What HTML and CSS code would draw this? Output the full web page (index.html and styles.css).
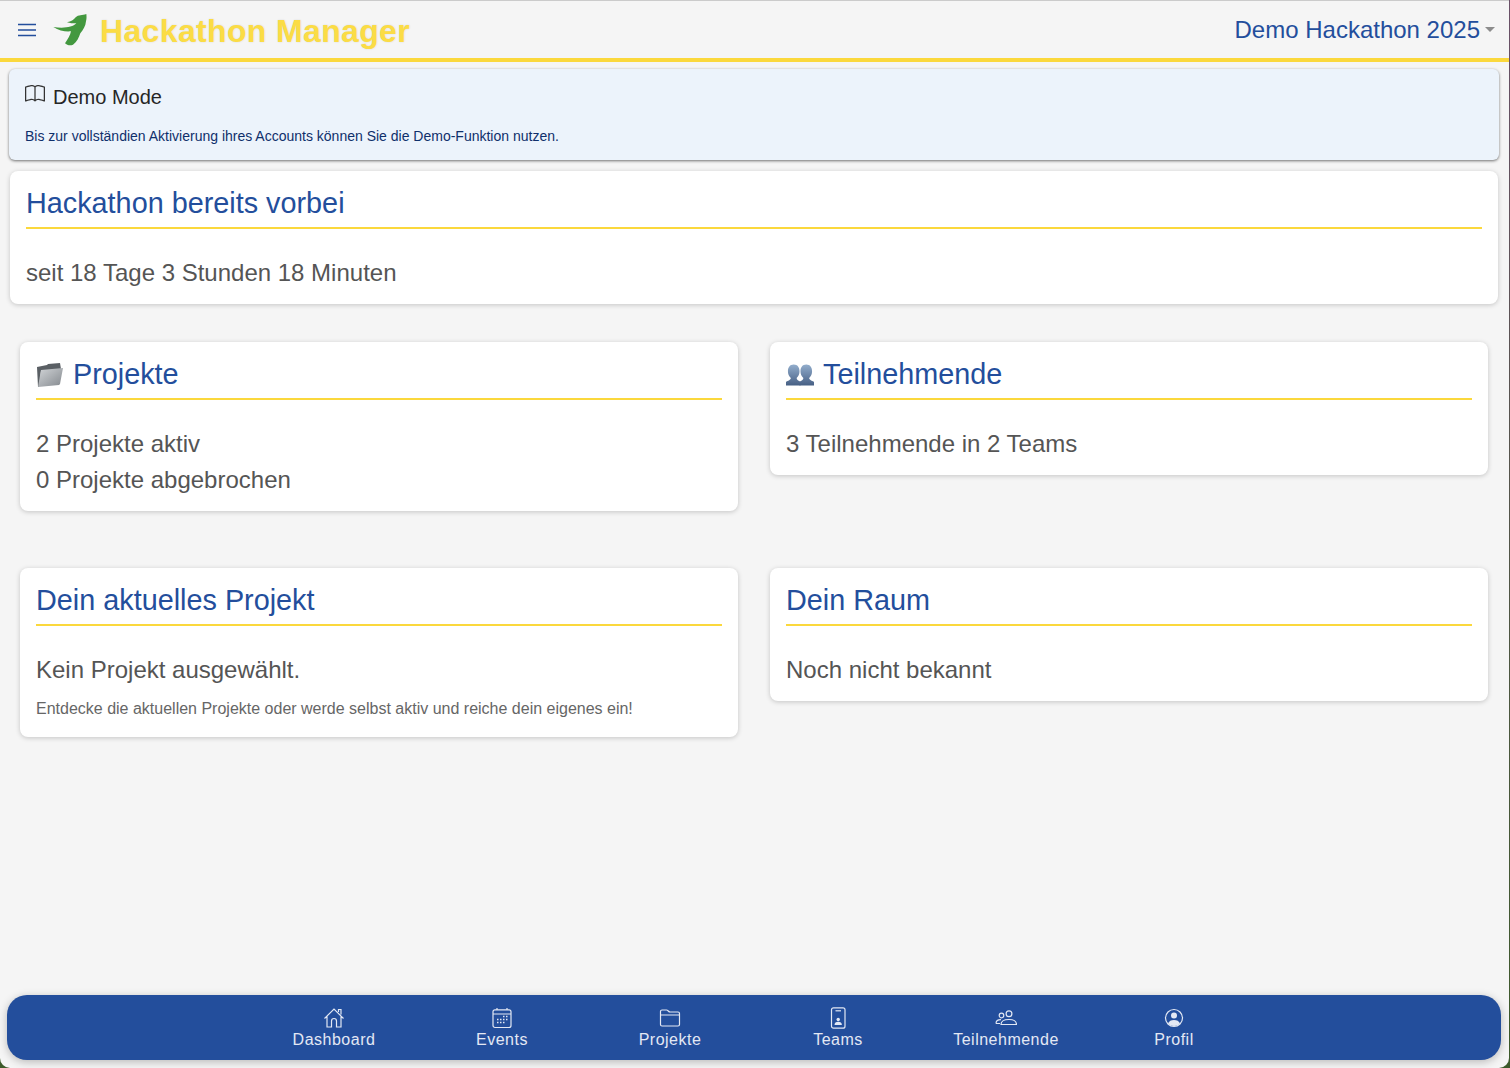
FILE: index.html
```html
<!DOCTYPE html>
<html>
    <head>
        <meta http-equiv="Content-Type" content="text/html; charset=utf-8">
        <title>Hackathon Manager</title>
        <link rel="stylesheet" href="styles.css">
    </head>
    <body>
        <div class="window">
            <header class="topbar">
                <svg class="burger" viewBox="0 0 18 14">
                    <path d="M0 1.5h18M0 7h18M0 12.5h18"/>
                </svg>
                <svg class="logo" viewBox="0 0 150 135">
                    <path d="M124 18C112 22 100 20 92 28C86 36 78 40 66 43C74 46 84 46 94 46C82 58 56 62 25 57C42 68 62 72 78 70C76 82 68 94 60 106C66 112 76 114 84 110C96 102 102 88 106 76C114 66 122 54 123 40C125 32 125 26 124 18Z"/>
                </svg>
                <span class="brand">Hackathon Manager</span>
                <span class="event-select">Demo Hackathon 2025<i class="caret"></i></span>
            </header>

            <main class="content">
                <section class="alert">
                    <div class="alert-title">
                        <svg class="book" viewBox="0 0 16 16">
                            <path d="M1 2.828c.885-.37 2.154-.769 3.388-.893 1.33-.134 2.458.063 3.112.752v9.746c-.935-.53-2.12-.603-3.213-.493-1.18.12-2.37.461-3.287.811V2.828zm7.5-.141c.654-.689 1.782-.886 3.112-.752 1.234.124 2.503.523 3.388.893v9.923c-.918-.35-2.107-.692-3.287-.81-1.094-.111-2.278-.039-3.213.492V2.687zM8 1.783C7.015.936 5.587.81 4.287.94c-1.514.153-3.042.672-3.994 1.105A.5.5 0 0 0 0 2.5v11a.5.5 0 0 0 .707.455c.882-.4 2.303-.881 3.68-1.02 1.409-.142 2.59.087 3.223.877a.5.5 0 0 0 .78 0c.633-.79 1.814-1.019 3.222-.877 1.378.139 2.8.62 3.681 1.02A.5.5 0 0 0 16 13.5v-11a.5.5 0 0 0-.293-.455c-.952-.433-2.48-.952-3.994-1.105C10.413.809 8.985.936 8 1.783z"/>
                        </svg>
                        <span>Demo Mode</span>
                    </div>
                    <p>Bis zur vollständien Aktivierung ihres Accounts können Sie die Demo-Funktion nutzen.</p>
                </section>

                <section class="card card-wide">
                    <h2>Hackathon bereits vorbei</h2>
                    <p>seit 18 Tage 3 Stunden 18 Minuten</p>
                </section>

                <div class="card-grid">
                    <section class="card">
                        <h2>
                            <svg class="emoji-folder" viewBox="0 0 28 26">
                                <defs>
                                    <linearGradient id="folderFront" x1="0" y1="0" x2="1" y2="1">
                                        <stop offset="0" stop-color="#d2d5d8"/>
                                        <stop offset="1" stop-color="#83888d"/>
                                    </linearGradient>
                                </defs>
                                <path fill="#5a5f64" d="M1 5l10-2 1-1 12-1 1 6-20 2-2 16-1 0z"/>
                                <path fill="url(#folderFront)" d="M5 8l22-2-3 16-1 1-21 2z"/>
                            </svg>
                            Projekte
                        </h2>
                        <p>2 Projekte aktiv</p>
                        <p>0 Projekte abgebrochen</p>
                    </section>
                    <section class="card">
                        <h2>
                            <svg class="emoji-people" viewBox="0 0 29 24">
                                <defs>
                                    <linearGradient id="bust" x1="0" y1="0" x2="0" y2="1">
                                        <stop offset="0" stop-color="#93aecd"/>
                                        <stop offset="1" stop-color="#465f84"/>
                                    </linearGradient>
                                </defs>
                                <path fill="url(#bust)" d="M8 1c4 0 6 3 6 7 0 3-1 5-3 7 0 2 2 3 4 4v4H0v-4c2-1 5-2 5-4-2-2-3-4-3-7 0-4 2-7 6-7z"/>
                                <path fill="url(#bust)" d="M21 1c4 0 6 3 6 7 0 3-1 5-3 7 0 2 3 3 5 4v4H14v-4c2-1 4-2 4-4-2-2-3-4-3-7 0-4 2-7 6-7z"/>
                            </svg>
                            Teilnehmende
                        </h2>
                        <p>3 Teilnehmende in 2 Teams</p>
                    </section>
                    <section class="card">
                        <h2>Dein aktuelles Projekt</h2>
                        <p>Kein Projekt ausgewählt.</p>
                        <small>Entdecke die aktuellen Projekte oder werde selbst aktiv und reiche dein eigenes ein!</small>
                    </section>
                    <section class="card">
                        <h2>Dein Raum</h2>
                        <p>Noch nicht bekannt</p>
                    </section>
                </div>
            </main>

            <nav class="bottom-nav">
                <a class="nav-item">
                    <svg viewBox="0 0 22 22">
                        <path d="M1.5 11.5L11 2l9.5 9.5M4 9.5V20h4.5v-6a2.5 2.500 0 0 1 5 0v6H18V9.5M15.5 5V2.500H18V7.500"/>
                    </svg>
                    Dashboard
                </a>
                <a class="nav-item">
                    <svg viewBox="0 0 22 22">
                        <rect x="2" y="2.800" width="18" height="17.700" rx="2"/>
                        <path d="M2 7h18M6 1v2M16 1v2"/>
                        <path class="dots" d="M12 9.500h1.500M15 9.500h1.500M6 12.500h1.500M9 12.500h1.500M12 12.500h1.500M15 12.500h1.500M6 15.500h1.500M9 15.500h1.500M12 15.500h1.500"/>
                    </svg>
                    Events
                </a>
                <a class="nav-item">
                    <svg viewBox="0 0 22 22">
                        <path d="M1.500 8V4.500a1.500 1.500 0 0 1 1.500-1.500h4.500c1.500 0 2 2 3.500 2h8a1.500 1.500 0 0 1 1.500 1.500v11a1.500 1.500 0 0 1-1.500 1.500H3a1.500 1.500 0 0 1-1.500-1.500zM1.500 8h19"/>
                    </svg>
                    Projekte
                </a>
                <a class="nav-item">
                    <svg viewBox="0 0 22 22">
                        <rect x="4.500" y="0.800" width="13.500" height="20.400" rx="2"/>
                        <path d="M8.500 3.800h5.500"/>
                        <circle class="solid" cx="11.200" cy="12.500" r="1.700"/>
                        <path class="solid" d="M7.500 18c0-2.200 1.500-3.200 3.700-3.200s3.700 1 3.700 3.200z"/>
                    </svg>
                    Teams
                </a>
                <a class="nav-item">
                    <svg viewBox="0 0 22 22">
                        <circle cx="6.500" cy="8.500" r="2.300"/>
                        <circle cx="14" cy="6.800" r="2.900"/>
                        <path d="M1 16.500c0-2.500 2-3.800 5-3.800M6 17.500c0-3.500 3.500-5 8-5s7.500 1.500 7.500 5zM1 16.500h4"/>
                    </svg>
                    Teilnehmende
                </a>
                <a class="nav-item">
                    <svg viewBox="0 0 22 22">
                        <circle cx="11" cy="11" r="8.500"/>
                        <circle class="solid" cx="11" cy="8.500" r="3"/>
                        <path class="solid" d="M5 16.500c1-2.500 3.200-3.500 6-3.500s5 1 6 3.500c-1.500 1.500-3.500 2.500-6 2.500s-4.500-1-6-2.500z"/>
                    </svg>
                    Profil
                </a>
            </nav>
        </div>
    </body>
</html>
```

FILE: styles.css
```css
* {
    box-sizing: border-box;
}

html,
body {
    height: 100%;
}

body {
    margin: 0;
    overflow: hidden;
    font-family: "Liberation Sans", Arial, sans-serif;
    background: linear-gradient(#6a5068, #3c5a2a);
}

.window {
    display: flex;
    flex-direction: column;
    height: 100%;
    margin-right: 1px;
    background-color: #f5f5f5;
    border-top: 1px solid #cbcbcb;
    border-radius: 0 0 10px 10px;
}

/* top bar */

.topbar {
    display: flex;
    align-items: center;
    flex: none;
    height: 61px;
    padding: 2px 14px 0 18px;
    border-bottom: 4px solid #fbd83c;
}

.burger {
    width: 18px;
    height: 14px;
    margin-top: -2px;
    fill: none;
    stroke: #234e9c;
    stroke-width: 1.7;
}

.logo {
    width: 50px;
    height: 45px;
    margin-left: 9px;
    fill: #43983f;
}

.brand {
    margin-top: 2px;
    margin-left: 5px;
    font-size: 32px;
    font-weight: bold;
    letter-spacing: .35px;
    color: #fbdc45;
    text-shadow: 0 0 2px rgba(0, 0, 0, .12);
}

.event-select {
    display: flex;
    align-items: center;
    margin-top: -2px;
    margin-left: auto;
    font-size: 24px;
    color: #234e9c;
}

.caret {
    width: 0;
    height: 0;
    margin-left: 5px;
    border-style: solid;
    border-width: 5px 5px 0;
    border-color: #8c8c8c transparent transparent;
}

/* content */

.content {
    flex: 1;
    padding: 7px 10px 0 9px;
}

.alert {
    height: 91px;
    padding: 15px 16px 0;
    color: #0f2f6b;
    background-color: #ecf3fb;
    border-radius: 6px;
    box-shadow: 0 1px 3px rgba(0, 0, 0, .55);
}

.alert-title {
    display: flex;
    align-items: flex-start;
    font-size: 20px;
    color: #262626;
}

.alert-title span {
    margin-top: 2px;
    margin-left: 8px;
}

.book {
    width: 20px;
    height: 20px;
    fill: #333;
}

.alert p {
    margin: 19px 0 0;
    font-size: 14px;
}

.card {
    padding: 16px 16px 13px;
    color: #555;
    background-color: #fff;
    border-radius: 8px;
    box-shadow: 0 1px 5px rgba(0, 0, 0, .2);
}

.card-wide {
    height: 133px;
    margin: 11px 1px 0;
}

.card h2 {
    display: flex;
    align-items: center;
    gap: 9px;
    height: 42px;
    margin: 0 0 26px;
    padding-bottom: 7px;
    font-size: 28.8px;
    font-weight: normal;
    color: #234e9c;
    border-bottom: 2px solid #fbd83c;
}

.card p {
    margin: 0;
    font-size: 24px;
    line-height: 36px;
}

.card small {
    display: block;
    margin: 12px 0 6px;
    font-size: 16px;
    line-height: 18px;
    color: #666;
}

.emoji-folder {
    width: 28px;
    height: 26px;
}

.emoji-people {
    width: 28px;
    height: 24px;
}

.card-grid {
    display: grid;
    grid-template-columns: 718px 718px;
    gap: 57px 32px;
    align-items: start;
    margin: 38px 0 0 11px;
}

/* bottom navigation */

.bottom-nav {
    display: flex;
    justify-content: center;
    flex: none;
    height: 65px;
    margin: 0 8px 8px 7px;
    padding-top: 12px;
    background-color: #234e9c;
    border-radius: 20px;
    box-shadow: 0 2px 8px rgba(0, 0, 0, .25);
}

.nav-item {
    display: flex;
    flex-direction: column;
    align-items: center;
    width: 168px;
    font-size: 16px;
    letter-spacing: .5px;
    line-height: 19px;
    color: #e3e8f4;
}

.nav-item svg {
    width: 22px;
    height: 22px;
    margin-bottom: 1px;
    fill: none;
    stroke: #e3e8f4;
    stroke-width: 1.2;
}

.nav-item .solid {
    fill: #e3e8f4;
    stroke: none;
}

.nav-item .dots {
    stroke-width: 1.5;
}
```
